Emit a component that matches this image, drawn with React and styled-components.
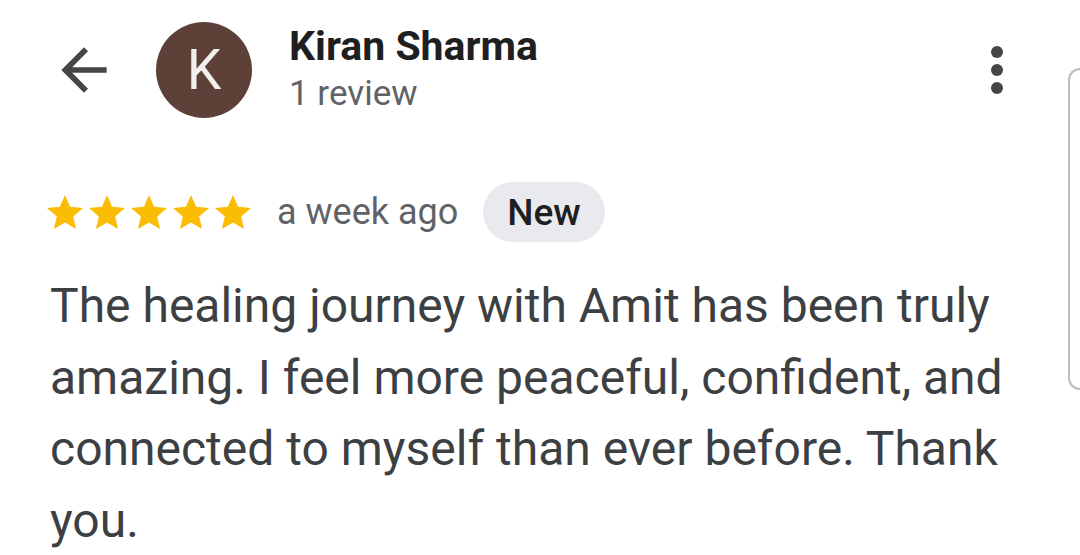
import React from "react";
import styled, { createGlobalStyle } from "styled-components";

const GlobalStyle = createGlobalStyle`
  html, body {
    margin: 0;
    padding: 0;
    background: #ffffff;
  }
  body {
    font-family: Roboto, "Noto Sans", "Liberation Sans", sans-serif;
    overflow: hidden;
  }
`;

const Page = styled.div`
  display: flex;
  width: 1080px;
  height: 555px;
  overflow: hidden;
  background: #fff;
`;

const Main = styled.div`
  flex: 1;
  display: flex;
  flex-direction: column;
`;

const Header = styled.div`
  display: flex;
  align-items: flex-start;
  padding-top: 22px;
`;

const IconButton = styled.div`
  flex: none;
  width: ${props => props.size}px;
  height: ${props => props.size}px;
  margin-top: ${props => props.top}px;
  margin-left: ${props => props.left || 0}px;
  margin-right: ${props => props.right || 0}px;
  color: #444746;
  svg {
    display: block;
    width: 100%;
    height: 100%;
  }
`;

const Avatar = styled.div`
  flex: none;
  width: 96px;
  height: 96px;
  margin-left: 38px;
  border-radius: 50%;
  background: #5d4037;
  color: #f3efed;
  display: flex;
  align-items: center;
  justify-content: center;
  font-size: 55px;
  line-height: 1;
`;

const Who = styled.div`
  flex: 1;
  display: flex;
  flex-direction: column;
  margin-left: 37px;
`;

const Name = styled.div`
  font-size: 41px;
  line-height: 48px;
  font-weight: 700;
  color: #1f1f1f;
`;

const Count = styled.div`
  margin-top: 2px;
  font-size: 35px;
  line-height: 44px;
  color: #5f6368;
`;

const Meta = styled.div`
  display: flex;
  align-items: center;
  height: 60px;
  margin-top: 64px;
  padding-left: 47px;
`;

const Stars = styled.div`
  display: flex;
  gap: 6px;
  color: #fbbc04;
  svg {
    display: block;
    width: 36px;
    height: 36px;
  }
`;

const When = styled.span`
  margin-left: 26px;
  font-size: 36px;
  color: #5f6368;
`;

const Chip = styled.span`
  margin-left: 25px;
  height: 60px;
  padding: 0 24px;
  border-radius: 30px;
  background: #e8eaed;
  color: #1f1f1f;
  font-size: 37px;
  font-weight: 500;
  display: flex;
  align-items: center;
`;

const Body = styled.p`
  margin: 28px 0 0 0;
  padding: 0 40px 0 50px;
  font-size: 48px;
  line-height: 71.5px;
  color: #3c4043;
`;

const SidePeek = styled.div`
  flex: none;
  width: 10px;
  height: 318px;
  margin-top: 68px;
  border: 2px solid #bdbdbd;
  border-right: none;
  border-radius: 12px 0 0 12px;
`;

const BackArrow = () => (
  <svg viewBox="0 0 24 24" fill="currentColor">
    <path d="M20 11H7.83l5.59-5.59L12 4l-8 8 8 8 1.41-1.41L7.83 13H20v-2z" />
  </svg>
);

const MoreVert = () => (
  <svg viewBox="0 0 24 24" fill="currentColor">
    <circle cx="12" cy="6" r="2" />
    <circle cx="12" cy="12" r="2" />
    <circle cx="12" cy="18" r="2" />
  </svg>
);

const Star = () => (
  <svg viewBox="2 1.5 20 20" fill="currentColor">
    <path d="M12 17.27L18.18 21l-1.64-7.03L22 9.24l-7.19-.61L12 2 9.19 8.63 2 9.24l5.46 4.73L5.82 21z" />
  </svg>
);

export default function App() {
  return (
    <>
      <GlobalStyle />
      <Page>
        <Main>
          <Header>
            <IconButton size={68} top={14} left={50}>
              <BackArrow />
            </IconButton>
            <Avatar>K</Avatar>
            <Who>
              <Name>Kiran Sharma</Name>
              <Count>1 review</Count>
            </Who>
            <IconButton size={72} top={12} right={35}>
              <MoreVert />
            </IconButton>
          </Header>
          <Meta>
            <Stars>
              {[0, 1, 2, 3, 4].map(i => (
                <Star key={i} />
              ))}
            </Stars>
            <When>a week ago</When>
            <Chip>New</Chip>
          </Meta>
          <Body>
            The healing journey with Amit has been truly amazing. I feel more
            peaceful, confident, and connected to myself than ever before.
            Thank you.
          </Body>
        </Main>
        <SidePeek />
      </Page>
    </>
  );
}
